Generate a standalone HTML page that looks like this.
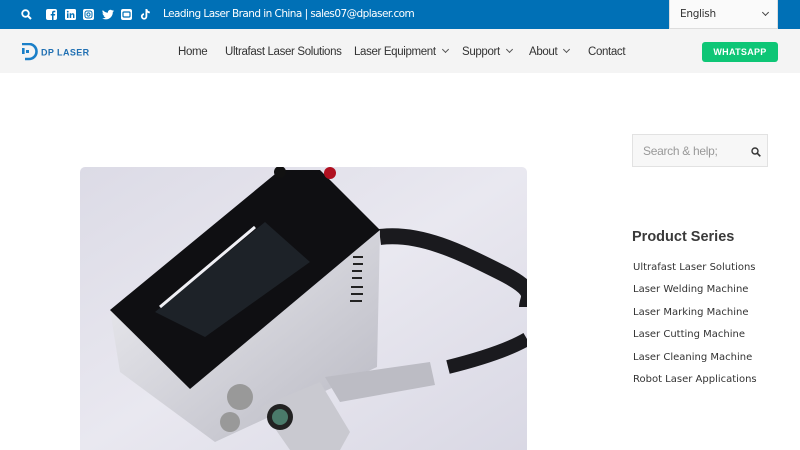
<!DOCTYPE html>
<html><head><meta charset="utf-8"><style>
*{margin:0;padding:0;box-sizing:border-box}
body{width:800px;height:450px;overflow:hidden;background:#fff;font-family:"Liberation Sans",sans-serif;position:relative}
.top{position:absolute;left:0;top:0;width:800px;height:29px;background:#0070b6}
.top .t{position:absolute;left:163px;top:8px;color:#fff;font-family:"DejaVu Sans",sans-serif;font-size:10.5px;letter-spacing:-0.55px}
.ico{position:absolute;top:9px;width:11px;height:11px}
.lang{position:absolute;left:669px;top:0;width:109px;height:29px;background:#fafafa;border:1px solid #ddd;border-top:0}
.lang span{position:absolute;left:10px;top:8px;font-family:"DejaVu Sans",sans-serif;font-size:10.5px;letter-spacing:-.3px;color:#333}
.nav{position:absolute;left:0;top:29px;width:800px;height:44px;background:#f4f4f4}
.nav a{position:absolute;top:17px;font-size:11.5px;letter-spacing:-.35px;color:#333;text-decoration:none}
.chev{display:inline-block;width:5px;height:5px;border-right:1px solid #555;border-bottom:1px solid #555;transform:rotate(45deg);margin-left:7px;position:relative;top:-3px}
.wa{position:absolute;left:702px;top:42px;width:76px;height:20px;background:#0ec676;border-radius:3px;color:#fff;font-size:9px;font-weight:bold;text-align:center;line-height:20px;letter-spacing:.3px}
.search{position:absolute;left:632px;top:134px;width:136px;height:33px;background:#f7f7f7;border:1px solid #e2e2e2}
.search span{position:absolute;left:10px;top:9px;font-size:12px;letter-spacing:-.3px;color:#999}
h3{position:absolute;left:632px;top:229px;font-size:14.5px;color:#3a3a3a;font-weight:bold}
.li{position:absolute;left:633px;font-family:"DejaVu Sans",sans-serif;font-size:10px;color:#333}
.img{position:absolute;left:80px;top:167px;width:447px;height:283px;border-radius:5px 5px 0 0;overflow:hidden}
</style></head><body>
<div class="top">
<svg class="ico" style="left:21px" viewBox="0 0 11 11"><circle cx="4.5" cy="4.5" r="3.3" fill="none" stroke="#fff" stroke-width="1.8"/><path d="M7 7L10 10" stroke="#fff" stroke-width="2"/></svg>
<svg class="ico" style="left:46px" viewBox="0 0 11 11"><rect width="11" height="11" rx="2" fill="#fff"/><path d="M7.5 11V6.5H9L9.2 5H7.5V4c0-.5.2-.8.8-.8h1V1.8H8C6.7 1.8 6 2.6 6 3.8V5H4.7v1.5H6V11z" fill="#0070b6"/></svg>
<svg class="ico" style="left:65px" viewBox="0 0 11 11"><rect width="11" height="11" rx="1.5" fill="#fff"/><rect x="2" y="4.3" width="1.5" height="4.7" fill="#0070b6"/><circle cx="2.75" cy="2.7" r=".9" fill="#0070b6"/><path d="M4.7 4.3h1.4v.8c.4-.6 1-.9 1.7-.9 1.3 0 1.6.9 1.6 2V9H8V6.5c0-.6-.2-1-.8-1s-1 .4-1 1V9H4.7z" fill="#0070b6"/></svg>
<svg class="ico" style="left:83px" viewBox="0 0 11 11"><rect width="11" height="11" rx="2" fill="#fff"/><rect x="2" y="2" width="7" height="7" rx="2" fill="none" stroke="#0070b6" stroke-width="1"/><circle cx="5.5" cy="5.5" r="1.6" fill="none" stroke="#0070b6"/></svg>
<svg class="ico" style="left:102px;width:12px" viewBox="0 0 12 11"><path d="M12 1.8c-.4.2-.9.3-1.4.4.5-.3.9-.8 1.1-1.3-.5.3-1 .5-1.6.6A2.5 2.5 0 0 0 5.9 3.7 7 7 0 0 1 .8 1.1a2.5 2.5 0 0 0 .8 3.3c-.4 0-.8-.1-1.1-.3 0 1.2.9 2.2 2 2.4-.4.1-.8.1-1.1 0 .3 1 1.2 1.7 2.3 1.7A5 5 0 0 1 0 9.3 7 7 0 0 0 3.8 10.4c4.5 0 7-3.7 7-7v-.3c.5-.4.9-.8 1.2-1.3z" fill="#fff"/></svg>
<svg class="ico" style="left:121px" viewBox="0 0 11 11"><rect width="11" height="11" rx="2" fill="#fff"/><rect x="2" y="3" width="7" height="5" rx="1" fill="none" stroke="#0070b6" stroke-width="1.2"/></svg>
<svg class="ico" style="left:140px" viewBox="0 0 11 11"><path d="M5.5 0h1.8c.1 1.4 1 2.4 2.5 2.5v1.8c-1 0-1.8-.3-2.5-.8V7.3A3.2 3.2 0 1 1 4 4.2v1.9A1.4 1.4 0 1 0 5.5 7.4z" fill="#fff"/></svg>
<div class="t">Leading Laser Brand in China | sales07@dplaser.com</div>
<div class="lang"><span>English</span><i class="chev" style="position:absolute;left:93px;top:10px;margin:0;border-color:#444"></i></div>
</div>
<div class="nav">
<svg style="position:absolute;left:21px;top:14px" width="75" height="18" viewBox="0 0 75 18"><path d="M1 1h7a7.5 7.5 0 0 1 0 15H4" fill="none" stroke="#1a7fc8" stroke-width="2.6"/><rect x="1" y="5" width="2.6" height="6" fill="#1a7fc8"/><rect x="5" y="7" width="3" height="3" fill="#1a7fc8"/><text x="20" y="12.5" font-family="Liberation Sans" font-weight="bold" font-size="9" fill="#1f6fb2" letter-spacing=".4">DP LASER</text></svg>
<a style="left:178px">Home</a>
<a style="left:225px">Ultrafast Laser Solutions</a>
<a style="left:354px">Laser Equipment<i class="chev"></i></a>
<a style="left:462px">Support<i class="chev"></i></a>
<a style="left:529px">About<i class="chev"></i></a>
<a style="left:588px">Contact</a>
</div>
<div class="wa">WHATSAPP</div>
<div class="img">
<svg width="447" height="283" viewBox="0 0 447 283">
<defs><linearGradient id="bg" x1="0" y1="0" x2="1" y2="1"><stop offset="0" stop-color="#dcdbe6"/><stop offset=".5" stop-color="#e9e8f0"/><stop offset="1" stop-color="#d9d8e4"/></linearGradient>
<linearGradient id="si" x1="0" y1="0" x2="1" y2="1"><stop offset="0" stop-color="#eeeef2"/><stop offset="1" stop-color="#b8b8c2"/></linearGradient></defs>
<rect width="447" height="283" fill="url(#bg)"/>
<path d="M300 70C340 65 380 85 420 105S447 130 447 140" fill="none" stroke="#1a1a1e" stroke-width="16"/>
<path d="M447 172C430 182 400 192 368 200" fill="none" stroke="#1a1a1e" stroke-width="14"/>
<polygon points="30,143 110,220 300,63 297,200 135,275 40,205" fill="url(#si)"/>
<polygon points="30,143 200,3 240,3 300,63 110,222" fill="#0f0f12"/>
<polygon points="75,145 185,55 230,95 125,170" fill="#1d2228"/>
<path d="M80 140L175 60" stroke="#f0f0f5" stroke-width="3"/>
<polygon points="180,240 240,215 270,265 260,283 210,283" fill="#c9c9d0"/>
<polygon points="245,210 350,195 355,218 260,235" fill="#bcbcc4"/>
<circle cx="200" cy="250" r="13" fill="#222"/><circle cx="200" cy="250" r="8" fill="#4a7a6a"/>
<circle cx="160" cy="230" r="13" fill="#999"/><circle cx="150" cy="255" r="10" fill="#999"/>
<g stroke="#222" stroke-width="2"><path d="M273 90h10M273 97h10M272 104h10M272 111h10M271 120h12M271 127h12M270 134h12"/></g>
<circle cx="200" cy="5" r="6" fill="#111"/><circle cx="250" cy="6" r="6" fill="#b01020"/>
</svg></div>
<div class="search"><span>Search &amp; help;</span><svg style="position:absolute;left:118px;top:12px" width="10" height="10" viewBox="0 0 10 10"><circle cx="4" cy="4" r="3" fill="none" stroke="#333" stroke-width="1.4"/><path d="M6.3 6.3L9.3 9.3" stroke="#333" stroke-width="1.6"/></svg></div>
<h3>Product Series</h3>
<div class="li" style="top:262px">Ultrafast Laser Solutions</div>
<div class="li" style="top:284px">Laser Welding Machine</div>
<div class="li" style="top:307px">Laser Marking Machine</div>
<div class="li" style="top:329px">Laser Cutting Machine</div>
<div class="li" style="top:352px">Laser Cleaning Machine</div>
<div class="li" style="top:374px">Robot Laser Applications</div>
</body></html>
